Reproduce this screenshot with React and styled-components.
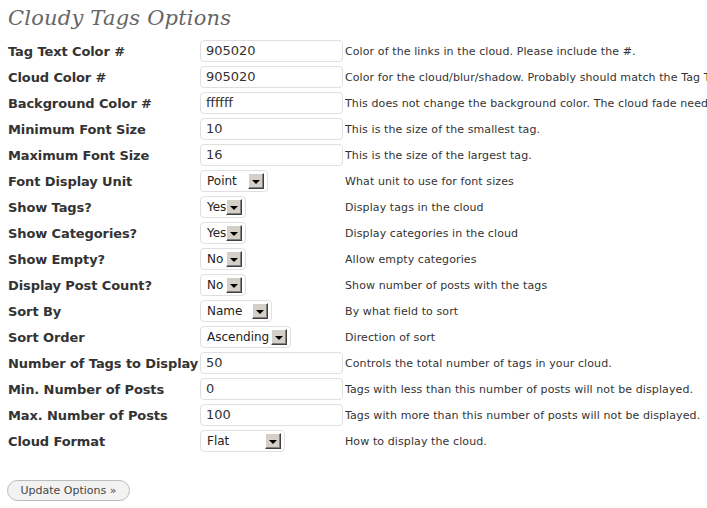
import styled, { createGlobalStyle } from 'styled-components';

const GlobalStyle = createGlobalStyle`
  html, body {
    margin: 0;
    padding: 0;
    background: #fff;
  }
  body {
    font-family: "DejaVu Sans", Verdana, sans-serif;
    color: #333;
  }
`;

const Wrap = styled.div`
  padding: 0 0 0 8px;
  width: 699px;
  overflow: hidden;
`;

const Title = styled.h2`
  margin: 0;
  padding: 4px 0 0;
  height: 34px;
  font-family: "DejaVu Serif", Georgia, serif;
  font-style: italic;
  font-weight: normal;
  font-size: 21px;
  letter-spacing: 0.2px;
  color: #666;
  line-height: 28px;
`;

const Form = styled.div`
  display: flex;
  flex-direction: column;
`;

const Row = styled.div`
  display: grid;
  grid-template-columns: 192px 145px 1fr;
  align-items: center;
  height: 26px;
`;

const Label = styled.div`
  font-size: 13px;
  font-weight: bold;
  color: #333;
  white-space: nowrap;
  letter-spacing: -0.1px;
`;

const TextInput = styled.div`
  box-sizing: border-box;
  width: 143px;
  height: 22px;
  border: 1px solid #dfdfdf;
  border-radius: 4px;
  background: #fff;
  font-size: 13px;
  line-height: 20px;
  padding: 0 5px;
  color: #333;
`;

const Select = styled.div`
  box-sizing: border-box;
  display: flex;
  align-items: center;
  justify-content: space-between;
  width: ${(p) => p.$width}px;
  height: 22px;
  border: 1px solid #dfdfdf;
  border-radius: 4px;
  background: #fff;
  font-size: 12px;
  padding: 0 3px 0 6px;
  color: #222;
  justify-self: start;
`;

const ArrowButton = styled.span`
  box-sizing: border-box;
  width: 16px;
  height: 16px;
  background: #d4d0c8;
  border: 1px solid;
  border-color: #fff #404040 #404040 #fff;
  box-shadow: inset -1px -1px 0 #808080;
  display: flex;
  align-items: center;
  justify-content: center;
  flex-shrink: 0;

  &::after {
    content: '';
    width: 0;
    height: 0;
    border-left: 4px solid transparent;
    border-right: 4px solid transparent;
    border-top: 4px solid #000;
    margin-top: 1px;
  }
`;

const Desc = styled.div`
  font-size: 11px;
  letter-spacing: 0.1px;
  color: #333;
  white-space: nowrap;
  overflow: hidden;
`;

const Submit = styled.div`
  padding: 25px 0 0 0;
`;

const Button = styled.button`
  box-sizing: border-box;
  height: 21px;
  width: 123px;
  margin-left: -1px;
  border: 1px solid #bbb;
  border-radius: 11px;
  background: #f2f2f2;
  font-family: "DejaVu Sans", Verdana, sans-serif;
  font-size: 11px;
  color: #464646;
  padding: 0;
`;

const rows = [
  { label: 'Tag Text Color #', value: '905020', desc: 'Color of the links in the cloud. Please include the #.' },
  { label: 'Cloud Color #', value: '905020', desc: 'Color for the cloud/blur/shadow. Probably should match the Tag Text Color.' },
  { label: 'Background Color #', value: 'ffffff', desc: 'This does not change the background color. The cloud fade needs to know what color to fade to.' },
  { label: 'Minimum Font Size', value: '10', desc: 'This is the size of the smallest tag.' },
  { label: 'Maximum Font Size', value: '16', desc: 'This is the size of the largest tag.' },
  { label: 'Font Display Unit', select: 'Point', width: 68, desc: 'What unit to use for font sizes' },
  { label: 'Show Tags?', select: 'Yes', width: 46, desc: 'Display tags in the cloud' },
  { label: 'Show Categories?', select: 'Yes', width: 46, desc: 'Display categories in the cloud' },
  { label: 'Show Empty?', select: 'No', width: 46, desc: 'Allow empty categories' },
  { label: 'Display Post Count?', select: 'No', width: 46, desc: 'Show number of posts with the tags' },
  { label: 'Sort By', select: 'Name', width: 72, desc: 'By what field to sort' },
  { label: 'Sort Order', select: 'Ascending', width: 91, desc: 'Direction of sort' },
  { label: 'Number of Tags to Display', value: '50', desc: 'Controls the total number of tags in your cloud.' },
  { label: 'Min. Number of Posts', value: '0', desc: 'Tags with less than this number of posts will not be displayed.' },
  { label: 'Max. Number of Posts', value: '100', desc: 'Tags with more than this number of posts will not be displayed.' },
  { label: 'Cloud Format', select: 'Flat', width: 85, desc: 'How to display the cloud.' },
];

export default function App() {
  return (
    <>
      <GlobalStyle />
      <Wrap>
        <Title>Cloudy Tags Options</Title>
        <Form>
          {rows.map((r) => (
            <Row key={r.label}>
              <Label>{r.label}</Label>
              {r.select ? (
                <Select $width={r.width}>
                  <span>{r.select}</span>
                  <ArrowButton />
                </Select>
              ) : (
                <TextInput>{r.value}</TextInput>
              )}
              <Desc>{r.desc}</Desc>
            </Row>
          ))}
        </Form>
        <Submit>
          <Button>Update Options »</Button>
        </Submit>
      </Wrap>
    </>
  );
}
